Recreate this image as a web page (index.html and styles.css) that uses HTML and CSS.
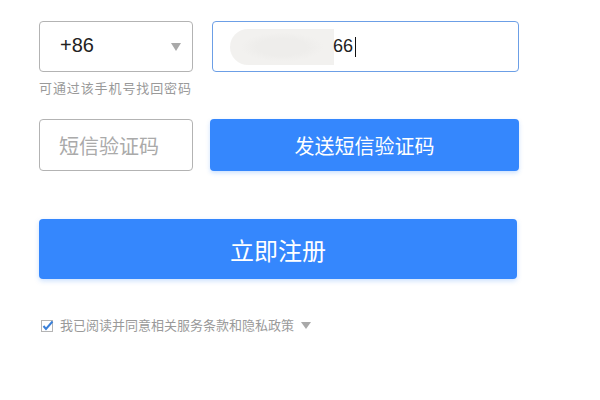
FILE: index.html
```html
<!DOCTYPE html>
<html lang="zh">
<head>
<meta charset="utf-8">
<link rel="stylesheet" href="styles.css">
</head>
<body>
<div class="form">
  <div class="row">
    <div class="select">
      <span class="code">+86</span>
      <span class="caret"></span>
    </div>
    <div class="phone">
      <span class="mask"></span>
      <span class="digits">66</span>
      <span class="cursor"></span>
    </div>
  </div>
  <div class="hint">可通过该手机号找回密码</div>
  <div class="row row2">
    <div class="sms">短信验证码</div>
    <button class="send">发送短信验证码</button>
  </div>
  <button class="register">立即注册</button>
  <div class="agree">
    <svg class="check" width="13" height="13" viewBox="0 0 13 13">
      <rect x="0.5" y="1.5" width="11" height="11" fill="#fff" stroke="#b4b4b4"/>
      <path d="M2.5 7 L5 10 L11.5 2.5" fill="none" stroke="#3a7fd8" stroke-width="2"/>
    </svg>
    <span class="agree-text">我已阅读并同意相关服务条款和隐私政策</span>
    <span class="caret small"></span>
  </div>
</div>
</body>
</html>
```
FILE: styles.css
```css
html, body {
  margin: 0;
  padding: 0;
  background: #fff;
}
body {
  font-family: "Noto Sans CJK SC", "Liberation Sans", sans-serif;
}
.form {
  padding: 21px 0 0 39px;
  width: 480px;
}
.row {
  display: flex;
  align-items: center;
}
.select {
  box-sizing: border-box;
  width: 154px;
  height: 51px;
  border: 1px solid #b3b3b3;
  border-radius: 4px;
  display: flex;
  align-items: center;
  justify-content: space-between;
  padding: 0 11px 0 20px;
}
.code {
  font-family: "Liberation Sans", Arial, sans-serif;
  font-size: 20px;
  color: #222;
  margin-top: -2px;
}
.caret {
  width: 0;
  height: 0;
  border-left: 5px solid transparent;
  border-right: 5px solid transparent;
  border-top: 8px solid #a9a9a9;
}
.phone {
  box-sizing: border-box;
  width: 307px;
  height: 51px;
  margin-left: 19px;
  border: 1px solid #6c9fe6;
  border-radius: 4px;
  display: flex;
  align-items: center;
  padding-left: 17px;
}
.mask {
  width: 104px;
  height: 36px;
  border-radius: 18px 0 0 18px;
  background: radial-gradient(ellipse 40% 40% at 50% 50%, #eeedeb 60%, #f2f1ef 100%);
}
.digits {
  font-family: "Liberation Sans", Arial, sans-serif;
  font-size: 18px;
  color: #222;
  margin-left: -1px;
}
.cursor {
  width: 1px;
  height: 20px;
  background: #111;
  margin-left: 2px;
}
.hint {
  margin-top: 8px;
  font-size: 13px;
  line-height: 16px;
  color: #9a9a9a;
  letter-spacing: 0.9px;
}
.row2 {
  margin-top: 23px;
}
.sms {
  box-sizing: border-box;
  width: 154px;
  height: 52px;
  border: 1px solid #b3b3b3;
  border-radius: 4px;
  display: flex;
  align-items: center;
  padding-left: 19px;
  font-size: 20px;
  color: #aaa;
}
.send {
  width: 309px;
  height: 52px;
  margin-left: 17px;
  border: none;
  border-radius: 4px;
  background: #3587fd;
  color: #fff;
  font-family: "Noto Sans CJK SC", sans-serif;
  font-size: 20px;
  box-shadow: 0 2px 4px rgba(53, 135, 253, 0.25);
  padding: 0;
}
.register {
  display: block;
  width: 478px;
  height: 60px;
  margin-top: 48px;
  border: none;
  border-radius: 4px;
  background: #3587fd;
  color: #fff;
  font-family: "Noto Sans CJK SC", sans-serif;
  font-size: 24px;
  box-shadow: 0 2px 5px rgba(53, 135, 253, 0.25);
  padding: 0;
}
.agree {
  margin-top: 38px;
  display: flex;
  align-items: center;
  padding-left: 2px;
}
.check {
  display: block;
}
.agree-text {
  margin-left: 6px;
  font-size: 13px;
  line-height: 16px;
  color: #9a9a9a;
}
.caret.small {
  margin-left: 7px;
  border-left-width: 5px;
  border-right-width: 5px;
  border-top-width: 7px;
  border-top-color: #a9a9a9;
}
```
